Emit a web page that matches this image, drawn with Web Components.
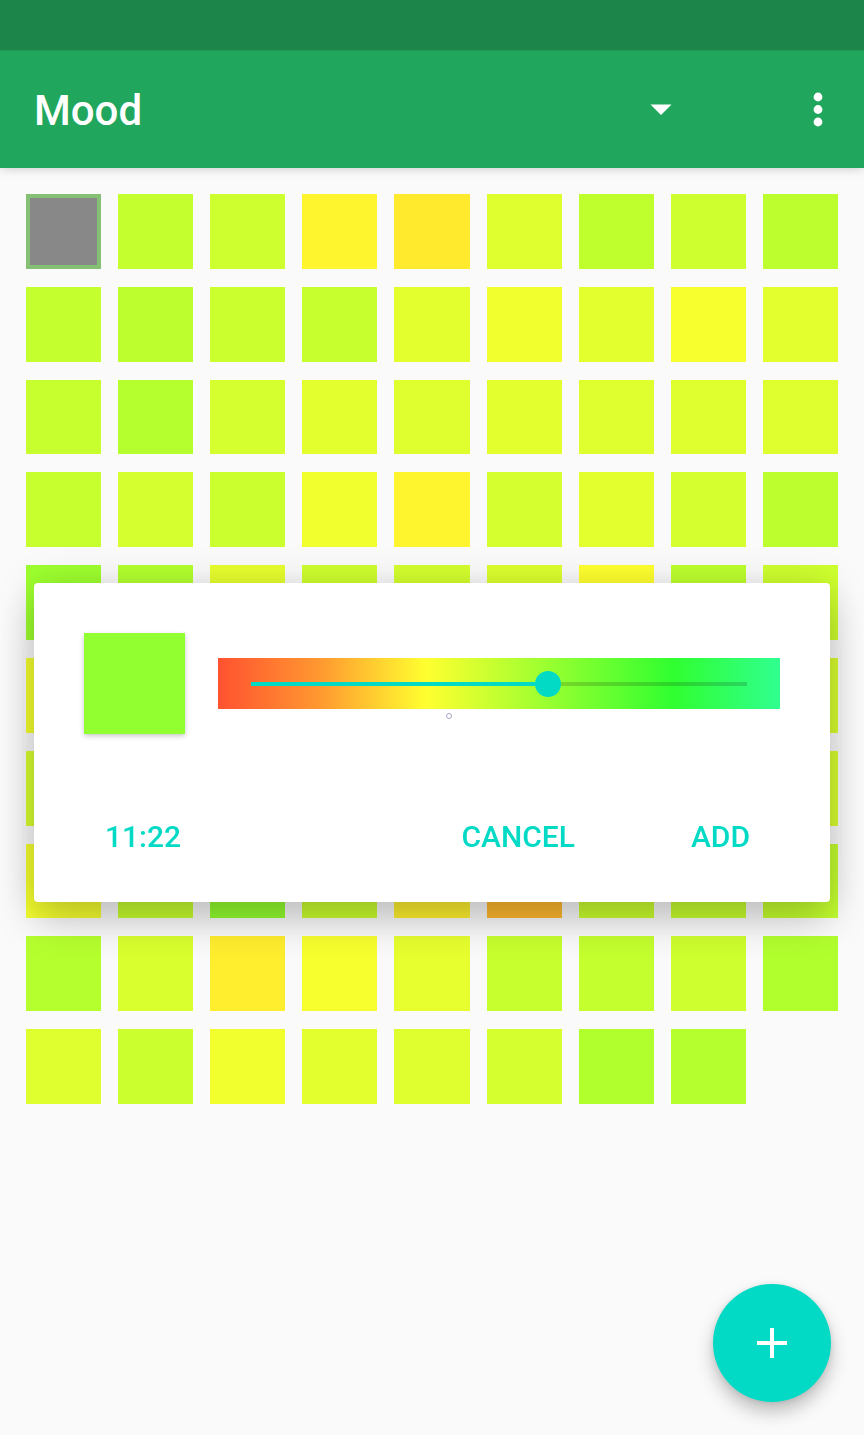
<!DOCTYPE html>
<html lang="en">
<head>
<meta charset="utf-8">
<meta name="viewport" content="width=device-width, initial-scale=1">
<title>Mood</title>
<style>
html, body { margin: 0; min-height: 100%; background: #fafafa; }
body { font-family: Roboto, "Liberation Sans", sans-serif; }
</style>
</head>
<body>
<mood-app></mood-app>

<template id="app-bar-tpl">
<style>
:host { display: block; background: #21a75d; color: #fff; box-shadow: 0 0 10px rgba(0,0,0,.22); }
.status { height: 50px; background: #1c854a; border-bottom: 1px solid #1f9854; }
header { display: flex; align-items: center; height: 117px; padding: 0 25px 0 34px; }
h1 { flex: 1; margin: 0; padding-top: 2px; font-size: 42px; line-height: 48px; font-weight: 500; }
button { display: flex; align-items: center; justify-content: center; border: 0; padding: 0; background: none; color: inherit; width: 42px; height: 64px; }
.menu { margin-right: 115px; }
svg { display: block; fill: currentColor; }
</style>
<div class="status"></div>
<header>
  <h1><slot></slot></h1>
  <button class="menu" aria-label="Choose mood"><svg width="22" height="12" viewBox="0 0 22 12"><path d="M.5 .5h21L11 11z"/></svg></button>
  <button aria-label="More options"><svg width="10" height="36" viewBox="0 0 10 36"><circle cx="5" cy="5" r="4.400"/><circle cx="5" cy="17.500" r="4.400"/><circle cx="5" cy="30" r="4.400"/></svg></button>
</header>
</template>

<template id="mood-cell-tpl">
<style>
:host { display: block; box-sizing: border-box; background: hsl(var(--hue) 100% 59%); }
:host([empty]) { background: #888; border: 4px solid #86c074; }
</style>
</template>

<template id="mood-grid-tpl">
<style>
:host { display: block; padding: 26px 26px 0; }
.grid { display: grid; grid-template: repeat(10, 1fr) / repeat(9, 1fr); gap: 18px 17px; aspect-ratio: 812 / 910; }
</style>
<div class="grid"></div>
</template>

<template id="mood-dialog-tpl">
<style>
:host { position: fixed; inset: 0; display: flex; align-items: center; padding: 50px 34px 0; pointer-events: none; }
section { flex: 1; box-sizing: border-box; padding: 50px; background: #fff; border-radius: 4px; box-shadow: 0 20px 40px rgba(0,0,0,.18), 0 2px 40px rgba(0,0,0,.13); pointer-events: auto; }
.pick { display: flex; align-items: center; gap: 33px; }
.swatch { width: 101px; height: 101px; background: #92ff30; box-shadow: 0 2px 5px rgba(0,0,0,.22); }
.bar { position: relative; flex: 1; }
input { appearance: none; display: block; box-sizing: border-box; width: 100%; height: 51px; margin: 0; padding: 0 21px;
  background: linear-gradient(90deg, #ff5230, #ff9830 18%, #ffff30 37%, #98ff30 59%, #30ff30 81%, #30ff90); }
input::-webkit-slider-runnable-track { height: 4px; background: linear-gradient(90deg, transparent 12px, #03dac6 12px 60%, rgba(0,0,0,.16) 60% calc(100% - 12px), transparent calc(100% - 12px)); }
input::-webkit-slider-thumb { appearance: none; width: 26px; height: 26px; margin-top: -11px; border-radius: 50%; background: #03dac6; }
.mark { position: absolute; left: 41%; top: 100%; margin: 4px 0 0 -2px; width: 6px; height: 6px; box-sizing: border-box; border: 1px solid #aaa4c4; border-radius: 50%; }
.actions { display: flex; align-items: center; justify-content: space-between; margin-top: 68px; height: 70px; margin-bottom: -20px; }
.end { display: flex; gap: 82px; }
button { border: 0; background: none; color: #03dac6; padding: 14px 17px; font: 500 30px/34px Roboto, "Liberation Sans", sans-serif; }
.time { padding: 14px 21px; }
.add { margin-right: 13px; }
</style>
<section role="dialog" aria-label="Add mood">
  <div class="pick">
    <div class="swatch"></div>
    <div class="bar"><input type="range" aria-label="Mood" min="0" max="100" value="60"><span class="mark"></span></div>
  </div>
  <div class="actions">
    <button class="time">11:22</button>
    <div class="end"><button>CANCEL</button><button class="add">ADD</button></div>
  </div>
</section>
</template>

<template id="add-fab-tpl">
<style>
:host { position: fixed; right: 33px; bottom: 33px; }
button { display: flex; align-items: center; justify-content: center; width: 118px; height: 118px; padding: 0; border: 0; border-radius: 50%; background: #03dac6; box-shadow: 0 10px 18px rgba(0,0,0,.24), 0 1px 6px rgba(0,0,0,.1); }
</style>
<button aria-label="Add entry"><svg width="30" height="30" viewBox="0 0 30 30"><path d="M15 0v30M0 15h30" stroke="#fff" stroke-width="4"/></svg></button>
</template>

<template id="mood-app-tpl">
<style>
:host { display: block; min-height: 100vh; background: #fafafa; }
app-bar { position: relative; }
</style>
<app-bar>Mood</app-bar>
<mood-grid></mood-grid>
<mood-dialog></mood-dialog>
<add-fab></add-fab>
</template>

<script>
class TemplateElement extends HTMLElement {
  constructor() {
    super();
    this.attachShadow({ mode: 'open' }).append(
      document.getElementById(this.localName + '-tpl').content.cloneNode(true));
  }
}
const MOODS = [
  [null, 77, 74, 57, 54, 69, 78, 74, 79],
  [77, 79, 75, 76, 68, 64, 68, 62, 68],
  [76, 81, 72, 68, 69, 68, 69, 69, 69],
  [76, 72, 75, 64, 57, 72, 68, 72, 79],
  [88, 82, 67, 74, 72, 70, 60, 79, 74],
  [63, 70, 70, 70, 70, 70, 70, 70, 71],
  [71, 70, 70, 70, 70, 70, 70, 70, 71],
  [63, 76, 91, 75, 56, 40, 75, 76, 77],
  [81, 71, 55, 62, 67, 76, 77, 74, 82],
  [69, 75, 64, 68, 69, 72, 82, 81]
];
class MoodCell extends TemplateElement {}
class MoodGrid extends TemplateElement {
  connectedCallback() {
    const grid = this.shadowRoot.querySelector('.grid');
    grid.replaceChildren(...MOODS.flat().map(hue => {
      const cell = document.createElement('mood-cell');
      if (hue === null) cell.setAttribute('empty', '');
      else cell.style.setProperty('--hue', hue);
      return cell;
    }));
  }
}
customElements.define('app-bar', class extends TemplateElement {});
customElements.define('mood-cell', MoodCell);
customElements.define('mood-grid', MoodGrid);
customElements.define('mood-dialog', class extends TemplateElement {});
customElements.define('add-fab', class extends TemplateElement {});
customElements.define('mood-app', class extends TemplateElement {});
</script>
</body>
</html>
